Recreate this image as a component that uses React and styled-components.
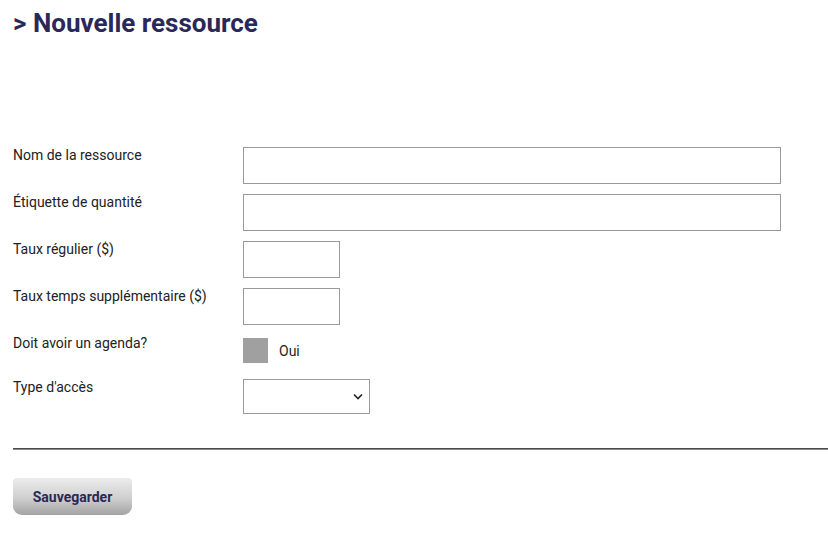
import React from "react";
import styled, { createGlobalStyle } from "styled-components";

const Global = createGlobalStyle`
  html, body { margin: 0; padding: 0; background: #fff; }
  body { font-family: Roboto, "Liberation Sans", Arial, sans-serif; color: #222; }
  * { box-sizing: border-box; }
`;

const Page = styled.div`
  padding: 0 0 0 13px;
  width: 828px;
`;

const Title = styled.h1`
  margin: 0;
  padding-top: 7px;
  font-size: 26px;
  line-height: 32px;
  font-weight: 700;
  color: #2a2858;
`;

const Form = styled.form`
  margin-top: 108px;
  display: flex;
  flex-direction: column;
  gap: 10px;
`;

const Row = styled.div`
  display: grid;
  grid-template-columns: 230px 1fr;
  align-items: start;
  margin-top: ${(p) => p.$mt || 0}px;
`;

const Label = styled.label`
  font-size: 14px;
  line-height: 16px;
  padding-top: ${(p) => p.$pt ?? 0}px;
  color: #222;
`;

const Input = styled.input`
  width: ${(p) => p.$w}px;
  height: 37px;
  border: 1px solid #9a9a9a;
  border-radius: 0;
  padding: 0 6px;
  font: inherit;
  outline: none;
  background: #fff;
`;

const CheckWrap = styled.div`
  display: flex;
  align-items: center;
  gap: 11px;
  padding-top: 3px;
  font-size: 14px;
  color: #222;
`;

const Box = styled.span`
  width: 25px;
  height: 25px;
  background: #a0a0a0;
  display: inline-block;
`;

const SelectBox = styled.div`
  position: relative;
  width: 127px;
  height: 35px;
  border: 1px solid #9a9a9a;
  background: #fff;
`;

const Chevron = styled.svg`
  position: absolute;
  right: 6px;
  top: 13px;
`;

const Divider = styled.hr`
  margin: 34px 0 0 0;
  border: 0;
  border-top: 1px solid #4a4a4a;
  border-bottom: 1px solid #8a8a8a;
  height: 0;
`;

const Button = styled.button`
  margin-top: 28px;
  width: 119px;
  height: 37px;
  border: 0;
  border-radius: 4px 4px 9px 9px;
  background: linear-gradient(to bottom, #ececec 0%, #cfcfcf 55%, #a3a3a3 100%);
  font-family: Roboto, "Liberation Sans", Arial, sans-serif;
  font-weight: 700;
  font-size: 14px;
  color: #2a2858;
  padding: 0;
  cursor: pointer;
`;

export default function App() {
  return (
    <>
      <Global />
      <Page>
        <Title>&gt; Nouvelle ressource</Title>
        <Form onSubmit={(e) => e.preventDefault()}>
          <Row>
            <Label>Nom de la ressource</Label>
            <Input $w={538} />
          </Row>
          <Row>
            <Label>Étiquette de quantité</Label>
            <Input $w={538} />
          </Row>
          <Row>
            <Label>Taux régulier ($)</Label>
            <Input $w={97} />
          </Row>
          <Row>
            <Label>Taux temps supplémentaire ($)</Label>
            <Input $w={97} />
          </Row>
          <Row>
            <Label>Doit avoir un agenda?</Label>
            <CheckWrap>
              <Box />
              <span>Oui</span>
            </CheckWrap>
          </Row>
          <Row $mt={6}>
            <Label>Type d'accès</Label>
            <SelectBox>
              <Chevron width="10" height="7" viewBox="0 0 10 7">
                <path d="M1 1.5 L5 5.5 L9 1.5" fill="none" stroke="#222" strokeWidth="1.6" />
              </Chevron>
            </SelectBox>
          </Row>
        </Form>
        <Divider />
        <Button type="button">Sauvegarder</Button>
      </Page>
    </>
  );
}
